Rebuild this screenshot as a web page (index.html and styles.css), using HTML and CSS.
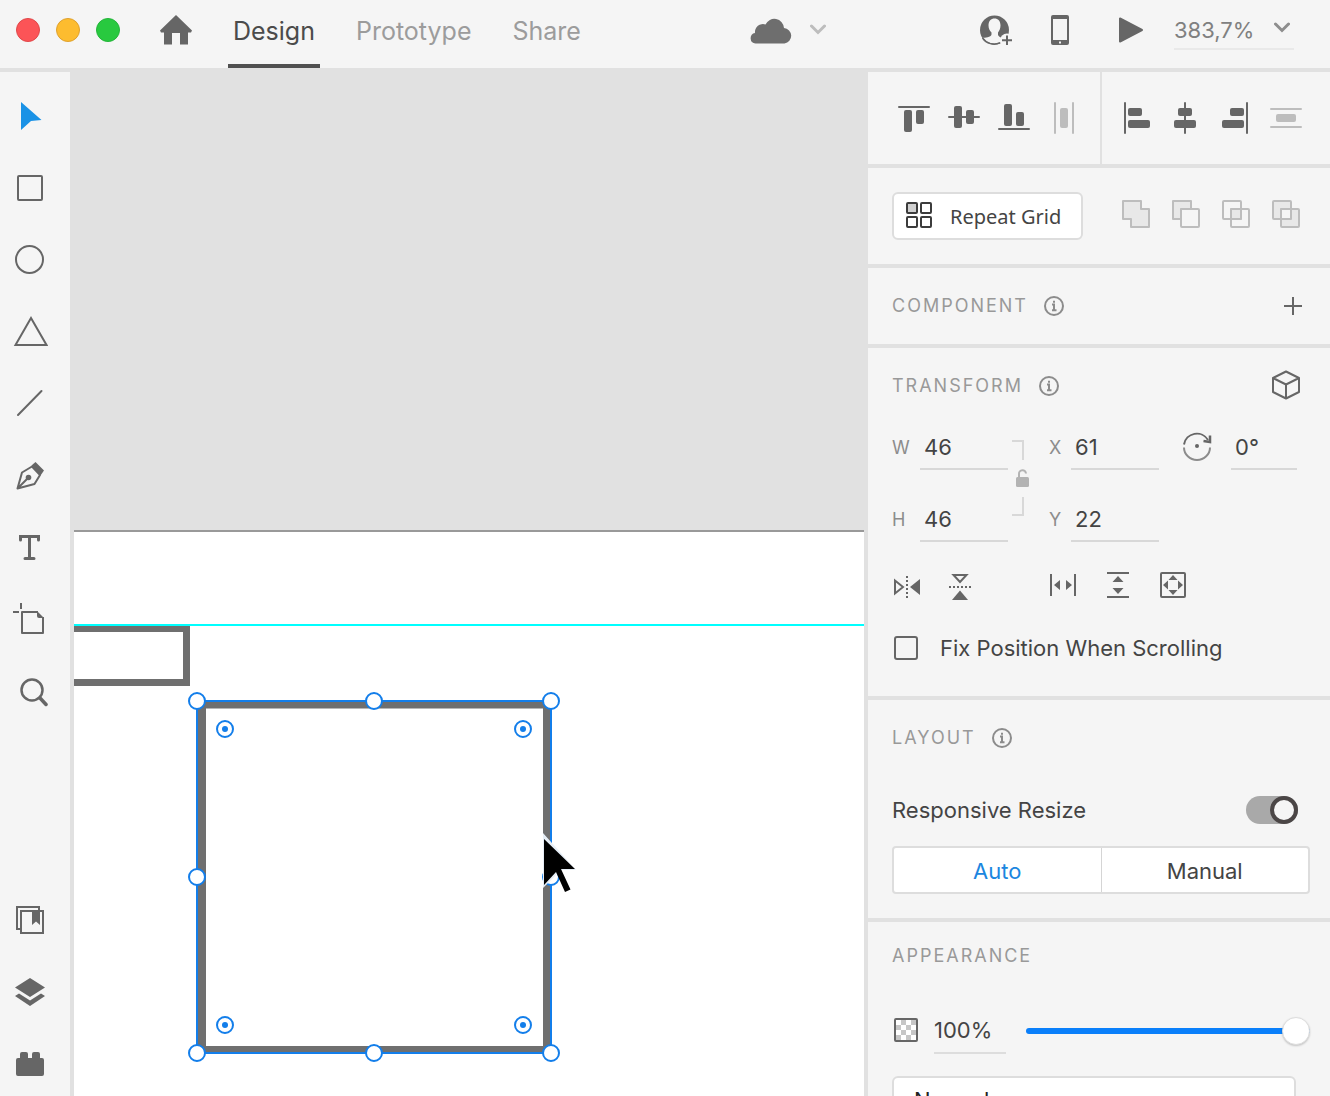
FILE: index.html
```html
<!DOCTYPE html>
<html lang="en">
<head>
  <meta charset="UTF-8">
  <meta name="viewport" content="width=device-width, initial-scale=1.0">
  <title>Design</title>
  <link rel="stylesheet" href="styles.css">
</head>
<body>
  <header class="topbar">
    <div class="lights">
      <button class="light red" aria-label="Close"></button>
      <button class="light yellow" aria-label="Minimize"></button>
      <button class="light green" aria-label="Zoom window"></button>
    </div>
    <button class="icon home" aria-label="Home">
      <svg width="32" height="32" viewBox="0 0 32 32"><path d="M16 1 32 16.500 31 18.500H28V30.500H20V19H12V30.500H4V18.500H1L0 16.500Z" fill="currentColor"/></svg>
    </button>
    <nav class="tabs">
      <button class="tab active">Design</button>
      <button class="tab">Prototype</button>
      <button class="tab">Share</button>
    </nav>
    <button class="icon cloud" aria-label="Cloud document">
      <svg width="42" height="28" viewBox="0 0 42 28"><path d="M5.500 27.500A5.300 5.300 0 0 1 5 17A8 8 0 0 1 15.500 8.500A9.700 9.700 0 0 1 34 12A7.800 7.800 0 0 1 34.500 27.500Z" fill="#6e6e6e"/></svg>
      <svg width="16" height="28" viewBox="0 0 16 28"><path d="M1.500 10 8 16.500 14.500 10" fill="none" stroke="#bdbdbd" stroke-width="3" stroke-linecap="round"/></svg>
    </button>
    <div class="actions">
      <button class="icon" aria-label="Invite">
        <svg width="36" height="36" viewBox="0 0 36 36">
          <circle cx="16.500" cy="18" r="14.500" fill="currentColor"/>
          <path d="M10.500 13.500C10.500 9 13 6.500 16.500 6.500S22.500 9 22.500 13.500C22.500 17 21 19 20 20.500V23C21 25.500 25 26 27 28L24 30C19 32 13 32 8.500 29.500L4.500 26C7 25.500 13 25.500 13.500 22.500V20.500C12 19 10.500 17 10.500 13.500Z" fill="#f5f5f5"/>
          <path d="M4.500 26A14 14 0 0 0 22 30.800" fill="none" stroke="currentColor" stroke-width="1.500"/>
          <circle cx="29" cy="28.500" r="7" fill="#f5f5f5"/>
          <path d="M29 23.500V33M24 28.200H34" stroke="currentColor" stroke-width="2"/>
        </svg>
      </button>
      <button class="icon device" aria-label="Device preview">
        <svg width="20" height="32" viewBox="0 0 20 32"><path fill-rule="evenodd" d="M3 1H17Q19 1 19 3V29Q19 31 17 31H3Q1 31 1 29V3Q1 1 3 1ZM3 5V26H17V5ZM9 27.500V29.500H11V27.500Z" fill="currentColor"/></svg>
      </button>
      <button class="icon" aria-label="Play">
        <svg width="26" height="28" viewBox="0 0 26 28"><path d="M2 2.500V25.500L24 14Z" fill="currentColor" stroke="currentColor" stroke-width="2" stroke-linejoin="round"/></svg>
      </button>
      <div class="zoom">
        <select aria-label="Zoom level"><option>383,7%</option></select>
        <svg width="16" height="12" viewBox="0 0 16 12"><path d="M1.500 2 8 8.500 14.500 2" fill="none" stroke="#8e8e8e" stroke-width="3" stroke-linecap="round"/></svg>
      </div>
    </div>
  </header>

  <main class="workspace">
    <aside class="toolbar">
      <div class="tools">
        <button class="tool selected" aria-label="Select"><svg viewBox="0 0 36 36"><path d="M9 4 29.500 22 19 23 9 32Z" fill="currentColor"/></svg></button>
        <button class="tool" aria-label="Rectangle"><svg viewBox="0 0 36 36"><rect class="line" x="6" y="6" width="24" height="24" rx="1"/></svg></button>
        <button class="tool" aria-label="Ellipse"><svg viewBox="0 0 36 36"><circle class="line" cx="17.500" cy="17.500" r="13.500"/></svg></button>
        <button class="tool" aria-label="Polygon"><svg viewBox="0 0 36 36"><path class="line" d="M19 4 34.500 31H3.500Z"/></svg></button>
        <button class="tool" aria-label="Line"><svg viewBox="0 0 36 36"><path class="line" d="M6 29 29.500 5" stroke-linecap="round"/></svg></button>
        <button class="tool" aria-label="Pen"><svg viewBox="0 0 36 36">
          <path class="line" d="M5.500 30.500 10 14.500 20 8.500 28 17 22.500 26Z M5.500 30.500 16.500 19.500" stroke-linejoin="round"/>
          <circle cx="16.500" cy="19.500" r="2.800" fill="currentColor"/>
          <path d="M19.500 7.500 23.500 4 32 12.500 28.500 17.500Z" fill="currentColor"/>
        </svg></button>
        <button class="tool" aria-label="Text"><svg viewBox="0 0 36 36"><path d="M8.500 10V6.500H26.500V10M17.500 6.500V28.500M13 28.500H22" fill="none" stroke="currentColor" stroke-width="3" stroke-linecap="round"/></svg></button>
        <button class="tool" aria-label="Artboard"><svg viewBox="0 0 36 36"><path class="line" d="M26 10H10V31H31V15M9 1V7M1 10H7" stroke-linejoin="round"/><path d="M25 9 32 16H27Q25 16 25 14Z" fill="currentColor"/></svg></button>
        <button class="tool" aria-label="Zoom"><svg viewBox="0 0 36 36"><circle cx="20" cy="16" r="10.500" fill="none" stroke="currentColor" stroke-width="2.500"/><path d="M28 24 34 30.500" stroke="currentColor" stroke-width="3.500" stroke-linecap="round"/></svg></button>
      </div>
      <div class="tools">
        <button class="tool" aria-label="Libraries"><svg viewBox="0 0 36 36"><path class="line" d="M8 27H5V5H27V8"/><rect class="line" x="9" y="9" width="22" height="22"/><path d="M20 9H28V23L24 19.500 20 23Z" fill="currentColor"/></svg></button>
        <button class="tool" aria-label="Layers"><svg viewBox="0 0 36 36"><path d="M18 4 33 13.500 18 23 3 13.500ZM3 22 7 19.500 18 26.500 29 19.500 33 22 18 32Z" fill="currentColor"/></svg></button>
        <button class="tool" aria-label="Plugins"><svg viewBox="0 0 36 36"><path d="M6 12H8V8Q8 6 10 6H14Q16 6 16 8V12H20V8Q20 6 22 6H26Q28 6 28 8V12H30Q32 12 32 14V28Q32 30 30 30H6Q4 30 4 28V14Q4 12 6 12Z" fill="currentColor"/></svg></button>
      </div>
    </aside>

    <section class="canvas">
      <div class="artboard">
        <div class="guide"></div>
        <div class="box"></div>
        <svg class="selection" width="372" height="370" viewBox="0 0 372 370">
          <path d="M9 9H363V361H9ZM18 16.500V354H355V16.500Z" fill="#6f6f6f" fill-rule="evenodd"/>
          <g fill="#fff" stroke="#137eea" stroke-width="2">
            <rect x="9" y="9" width="354" height="352" fill="none"/>
            <circle cx="9" cy="9" r="8"/><circle cx="186" cy="9" r="8"/><circle cx="363" cy="9" r="8"/>
            <circle cx="9" cy="185" r="8"/><circle cx="363" cy="185" r="8"/>
            <circle cx="9" cy="361" r="8"/><circle cx="186" cy="361" r="8"/><circle cx="363" cy="361" r="8"/>
            <circle cx="37" cy="37" r="8"/><circle cx="335" cy="37" r="8"/>
            <circle cx="37" cy="333" r="8"/><circle cx="335" cy="333" r="8"/>
          </g>
          <g fill="#137eea">
            <circle cx="37" cy="37" r="3"/><circle cx="335" cy="37" r="3"/>
            <circle cx="37" cy="333" r="3"/><circle cx="335" cy="333" r="3"/>
          </g>
        </svg>
        <svg class="pointer" width="40" height="66" viewBox="0 0 40 66"><path d="M3 3V58L15 46 15.500 45 22.500 40H36Z" fill="#e6eef6"/><path d="M4 9 35 39H21L30.500 59.500 25 62 16 42 4 55Z"/></svg>
      </div>
    </section>

    <aside class="panel">
      <section class="align">
        <div class="align-group">
          <button class="icon" aria-label="Align top"><svg width="32" height="32"><rect y="4" width="32" height="2" rx="1"/><rect x="6" y="8" width="8" height="22" rx="2"/><rect x="18" y="8" width="8" height="14" rx="2"/></svg></button>
          <button class="icon" aria-label="Align middle"><svg width="32" height="32"><rect y="14" width="32" height="2" rx="1"/><rect x="6" y="4" width="8" height="22" rx="2"/><rect x="18" y="8" width="8" height="14" rx="2"/></svg></button>
          <button class="icon" aria-label="Align bottom"><svg width="32" height="32"><rect y="26" width="32" height="2" rx="1"/><rect x="6" y="2" width="8" height="22" rx="2"/><rect x="18" y="10" width="8" height="14" rx="2"/></svg></button>
          <button class="icon off" aria-label="Distribute horizontally"><svg width="32" height="32"><rect x="6" width="2" height="32" rx="1"/><rect x="24" width="2" height="32" rx="1"/><rect x="12" y="6" width="8" height="20" rx="2"/></svg></button>
        </div>
        <div class="align-group">
          <button class="icon" aria-label="Align left"><svg width="32" height="32"><rect x="4" width="2" height="32" rx="1"/><rect x="8" y="6" width="14" height="8" rx="2"/><rect x="8" y="18" width="22" height="8" rx="2"/></svg></button>
          <button class="icon" aria-label="Align center"><svg width="32" height="32"><rect x="14" width="2" height="32" rx="1"/><rect x="8" y="6" width="14" height="8" rx="2"/><rect x="4" y="18" width="22" height="8" rx="2"/></svg></button>
          <button class="icon" aria-label="Align right"><svg width="32" height="32"><rect x="26" width="2" height="32" rx="1"/><rect x="10" y="6" width="14" height="8" rx="2"/><rect x="2" y="18" width="22" height="8" rx="2"/></svg></button>
          <button class="icon off" aria-label="Distribute vertically"><svg width="32" height="32"><rect y="6" width="32" height="2" rx="1"/><rect y="24" width="32" height="2" rx="1"/><rect x="6" y="12" width="20" height="8" rx="2"/></svg></button>
        </div>
      </section>

      <section class="repeat">
        <button class="repeat-button">
          <svg width="26" height="28" fill="none" stroke="#3c3c3c" stroke-width="2"><rect x="1" y="1" width="10" height="10" rx="1" fill="#d0d0d0"/><rect x="15" y="1" width="10" height="10" rx="1"/><rect x="1" y="15" width="10" height="10" rx="1"/><rect x="15" y="15" width="10" height="10" rx="1"/></svg>
          Repeat Grid
        </button>
        <div class="booleans">
          <button class="icon" aria-label="Add"><svg width="28" height="28"><path d="M1 1H19V9H27V27H9V19H1Z" fill="#e8e8e8"/></svg></button>
          <button class="icon" aria-label="Subtract"><svg width="28" height="28"><path d="M1 1H19V9H9V19H1Z" fill="#e8e8e8"/><rect x="9" y="9" width="18" height="18" rx="1"/></svg></button>
          <button class="icon" aria-label="Intersect"><svg width="28" height="28"><rect x="1" y="1" width="18" height="18" rx="1"/><rect x="9" y="9" width="18" height="18" rx="1"/><path d="M9 9H19V19H9Z" fill="#e8e8e8"/></svg></button>
          <button class="icon" aria-label="Exclude overlap"><svg width="28" height="28"><rect x="1" y="1" width="18" height="18" rx="1" fill="#e8e8e8"/><rect x="9" y="9" width="18" height="18" rx="1" fill="#e8e8e8"/><path d="M9 9H19V19H9Z" fill="#f5f5f5"/></svg></button>
        </div>
      </section>

      <section>
        <div class="section-head">
          <h2>Component</h2>
          <svg class="info" viewBox="0 0 20 20"><circle cx="10" cy="10" r="9"/><path d="M8 8.500H10V14M8 14.200H12.500M9 5.800H11"/></svg>
          <button class="icon end" aria-label="Add component"><svg width="20" height="20"><path d="M11 1V19M2 10H20" stroke="currentColor" stroke-width="2"/></svg></button>
        </div>
      </section>

      <section class="transform">
        <div class="section-head">
          <h2>Transform</h2>
          <svg class="info" viewBox="0 0 20 20"><circle cx="10" cy="10" r="9"/><path d="M8 8.500H10V14M8 14.200H12.500M9 5.800H11"/></svg>
          <button class="icon end" aria-label="3D transforms"><svg width="30" height="32" viewBox="1 0 30 32" fill="none" stroke="currentColor" stroke-width="2" stroke-linejoin="round"><path d="M15 1.500 28 8V22L15 28.500 2 22V8ZM2 8 15 14.500 28 8M15 14.500V28.500"/></svg></button>
        </div>
        <div class="fields">
          <label for="w">W</label><input id="w" type="text" value="46">
          <svg class="lock" width="24" height="118" viewBox="0 0 24 118">
            <path d="M4 17H15V36M15 73V91H4" fill="none" stroke="#d8d8d8" stroke-width="2"/>
            <rect x="8" y="53" width="13" height="10" rx="1.500" fill="#b3b3b3"/>
            <path d="M11 53V50A3.500 3.500 0 0 1 18 49.500" fill="none" stroke="#b3b3b3" stroke-width="2"/>
          </svg>
          <label for="x">X</label><input id="x" type="text" value="61">
          <label for="angle" class="angle" aria-label="Rotation"><svg width="30" height="30" viewBox="0 0 30 30" fill="none" stroke-width="2"><path d="M1 12.500A13 13 0 0 1 25 8" stroke="#666"/><path d="M1 15.500A13 12.500 0 0 0 27 15.500" stroke="#8c8c8c"/><circle cx="14" cy="14" r="2" fill="#666"/><path d="M27 3.500V10L20.500 9" stroke="#666" stroke-width="2.500"/></svg></label><input id="angle" type="text" value="0°">
          <label for="h">H</label><input id="h" type="text" value="46">
          <label for="y">Y</label><input id="y" type="text" value="22">
        </div>
        <div class="flips">
          <button class="icon" aria-label="Flip horizontally"><svg width="28" height="28"><path d="M3 8.500V21.500L11 15Z" fill="none" stroke="currentColor" stroke-width="2"/><path d="M15 4V27" stroke="currentColor" stroke-width="2" stroke-dasharray="2 2"/><path d="M28 7V23L18 15Z" fill="currentColor"/></svg></button>
          <button class="icon" aria-label="Flip vertically"><svg width="28" height="28"><path d="M6.500 3H19.500L13 10Z" fill="none" stroke="currentColor" stroke-width="2"/><path d="M2 15H25" stroke="currentColor" stroke-width="2" stroke-dasharray="2 2"/><path d="M5 28H21L13 18.500Z" fill="currentColor"/></svg></button>
          <button class="icon gap" aria-label="Fit width"><svg width="28" height="28"><path d="M2 2V24M26 2V24" stroke="currentColor" stroke-width="2"/><path d="M5 13 11 8V18ZM23 13 17 8V18Z" fill="currentColor"/></svg></button>
          <button class="icon" aria-label="Fit height"><svg width="28" height="28"><path d="M3 1H25M3 25H25" stroke="currentColor" stroke-width="2"/><path d="M14 4 19.500 10H8.500ZM14 22 19.500 16H8.500Z" fill="currentColor"/></svg></button>
          <button class="icon" aria-label="Fit both"><svg width="28" height="28"><rect x="2" y="1" width="24" height="24" rx="1" fill="none" stroke="currentColor" stroke-width="2"/><path d="M14 3 18.500 8H9.500ZM14 23 18.500 18H9.500ZM4 13 9 8.500V17.500ZM24 13 19 8.500V17.500Z" fill="currentColor"/></svg></button>
        </div>
        <label class="check"><input type="checkbox"> Fix Position When Scrolling</label>
      </section>

      <section class="layout">
        <div class="section-head">
          <h2>Layout</h2>
          <svg class="info" viewBox="0 0 20 20"><circle cx="10" cy="10" r="9"/><path d="M8 8.500H10V14M8 14.200H12.500M9 5.800H11"/></svg>
        </div>
        <div class="resize">
          <label for="resize">Responsive Resize</label>
          <input id="resize" class="switch" type="checkbox" checked>
        </div>
        <div class="segmented">
          <button class="active">Auto</button>
          <button>Manual</button>
        </div>
      </section>

      <section class="appearance">
        <div class="section-head">
          <h2>Appearance</h2>
        </div>
        <div class="opacity">
          <svg width="24" height="26"><rect x="1" y="1" width="22" height="22" rx="1" fill="#fff" stroke="#666" stroke-width="2"/><path d="M2 7H7V2H12V7H17V2H22V7H17V12H22V17H17V22H12V17H7V22H2V17H7V12H2ZM7 7V12H12V7ZM12 12V17H17V12Z" fill="#c6c6c6" fill-rule="evenodd"/></svg>
          <input class="percent" type="text" value="100%" aria-label="Opacity">
          <input class="slider" type="range" min="0" max="100" value="100" aria-label="Opacity slider">
        </div>
        <select class="blend" aria-label="Blend mode"><option>Normal</option></select>
      </section>
    </aside>
  </main>
</body>
</html>
```

FILE: styles.css
```css
*, *::before {
  box-sizing: border-box;
}
body {
  margin: 0;
  height: 100vh;
  display: flex;
  flex-direction: column;
  overflow: hidden;
  font-family: Inter, "Liberation Sans", sans-serif;
  font-size: 22px;
  color: #444;
  background-color: #f5f5f5;
}
button, input, select {
  font: inherit;
  color: inherit;
  border: none;
  background: none;
  padding: 0;
  margin: 0;
}
button {
  cursor: pointer;
}
svg {
  display: block;
  flex-shrink: 0;
}
.icon {
  display: flex;
  align-items: center;
  color: #666;
}

/* top bar */
.topbar {
  display: flex;
  align-items: center;
  height: 72px;
  flex-shrink: 0;
  padding: 0 36px 8px 16px;
  border-bottom: 4px solid #e1e1e1;
}
.lights {
  display: flex;
  gap: 16px;
  margin-right: 40px;
}
.light {
  width: 24px;
  height: 24px;
  border-radius: 50%;
}
.red {
  background-color: #fc5457;
  border: 1px solid #e0484a;
}
.yellow {
  background-color: #fdbc2f;
  border: 1px solid #dfa12e;
}
.green {
  background-color: #28c93f;
  border: 1px solid #24b53a;
}
.tabs {
  display: flex;
  gap: 31px;
  margin-left: 36px;
  margin-bottom: -8px;
}
.tab {
  height: 68px;
  padding: 0 5px 2px;
  font-size: 25px;
  color: #9c9c9c;
  border-bottom: 4px solid transparent;
}
.tab.active {
  color: #4b4b4b;
  border-bottom-color: #505050;
}
.cloud {
  gap: 18px;
  margin: 0 auto;
  padding-left: 12px;
}
.actions {
  display: flex;
  align-items: center;
  gap: 36px;
}
.device {
  margin-right: 12px;
}
.zoom {
  position: relative;
  width: 120px;
  margin-left: -6px;
}
.zoom select {
  width: 100%;
  height: 40px;
  padding-top: 2px;
  color: #808080;
  appearance: none;
  border-bottom: 2px solid #e9e9e9;
}
.zoom svg {
  position: absolute;
  right: 4px;
  top: 12px;
  pointer-events: none;
}

/* left tools */
.workspace {
  flex: 1;
  min-height: 0;
  display: flex;
}
.toolbar {
  width: 74px;
  flex-shrink: 0;
  display: flex;
  flex-direction: column;
  justify-content: space-between;
  padding: 16px 0 4px;
  border-right: 4px solid #e1e1e1;
}
.tools {
  display: flex;
  flex-direction: column;
  gap: 16px;
}
.tool {
  display: flex;
  align-items: center;
  justify-content: center;
  width: 60px;
  height: 56px;
  color: #666;
}
.tool.selected {
  color: #1a92e6;
}
.tool svg {
  width: 36px;
  height: 36px;
}
.line {
  fill: none;
  stroke: currentColor;
  stroke-width: 2;
}

/* canvas */
.canvas {
  position: relative;
  flex: 1;
  overflow: hidden;
  background-color: #e1e1e1;
}
.artboard {
  position: absolute;
  top: 458px;
  left: 0;
  right: 0;
  bottom: 0;
  background-color: #fff;
  border-top: 2px solid #999;
}
.guide {
  position: absolute;
  top: 92px;
  left: 0;
  right: 0;
  height: 2px;
  background-color: #00ffff;
}
.box {
  position: absolute;
  top: 94px;
  left: 0;
  width: 116px;
  height: 60px;
  border: solid #6f6f6f;
  border-width: 6px 7px 7px 0;
}
.selection {
  position: absolute;
  top: 160px;
  left: 114px;
}
.pointer {
  position: absolute;
  top: 298px;
  left: 466px;
}

/* right panel */
.panel {
  width: 466px;
  flex-shrink: 0;
  overflow: hidden;
  border-left: 4px solid #e1e1e1;
}
.panel > section {
  padding-left: 24px;
  border-bottom: 4px solid #e1e1e1;
}
.panel > .align {
  display: flex;
  padding: 0;
}
.align-group {
  display: flex;
  gap: 18px;
  padding: 30px 20px 30px 30px;
  fill: #666;
}
.align-group + .align-group {
  padding-left: 18px;
  border-left: 2px solid #e1e1e1;
}
.off {
  fill: #bdbdbd;
}
.repeat {
  display: flex;
  align-items: center;
  justify-content: space-between;
  height: 100px;
  padding-right: 30px;
}
.repeat-button {
  display: flex;
  align-items: center;
  gap: 18px;
  height: 48px;
  padding: 0 20px 0 12px;
  font-family: "Noto Sans", sans-serif;
  font-size: 20px;
  background-color: #fff;
  border: 2px solid #ddd;
  border-radius: 6px;
}
.booleans {
  display: flex;
  gap: 22px;
  padding-bottom: 4px;
  fill: none;
  stroke: #bdbdbd;
  stroke-width: 2;
  stroke-linejoin: round;
}
.section-head {
  display: flex;
  align-items: center;
  height: 76px;
  padding-right: 28px;
}
.section-head h2 {
  margin: 0 16px 0 0;
  font-size: 18px;
  font-weight: 400;
  line-height: 24px;
  letter-spacing: 2px;
  text-transform: uppercase;
  color: #999;
}
.info {
  width: 20px;
  height: 20px;
  fill: none;
  stroke: #8c8c8c;
  stroke-width: 2;
}
.end {
  margin-left: auto;
}
.fields {
  display: grid;
  grid-template-columns: 28px 88px 41px 22px 88px 24px 48px 66px;
  grid-template-rows: 46px 46px;
  row-gap: 26px;
}
.fields label {
  align-self: center;
  font-size: 18px;
  color: #8c8c8c;
}
.fields input {
  width: 100%;
  padding: 2px 0 0 4px;
  border-bottom: 2px solid #d8d8d8;
}
.lock {
  grid-column: 3;
  grid-row: 1 / 3;
}
.fields .angle {
  grid-column: 7;
}
.flips {
  display: flex;
  gap: 27px;
  margin-top: 30px;
}
.gap {
  margin-left: 47px;
}
.check {
  display: flex;
  align-items: center;
  gap: 22px;
  height: 24px;
  margin: 36px 0;
  padding-left: 2px;
}
.check input {
  appearance: none;
  width: 24px;
  height: 24px;
  border: 2px solid #666;
  border-radius: 3px;
}
.resize {
  display: flex;
  align-items: center;
  justify-content: space-between;
  height: 28px;
  margin: 20px 32px 22px 0;
}
.switch {
  appearance: none;
  display: flex;
  justify-content: flex-end;
  width: 52px;
  height: 28px;
  border-radius: 14px;
  background-color: #a9a9a9;
}
.switch::before {
  content: "";
  width: 28px;
  height: 28px;
  border: 4px solid #4b4646;
  border-radius: 50%;
  background-color: #f5f5f5;
}
.segmented {
  display: flex;
  height: 48px;
  margin: 0 20px 24px 0;
  background-color: #fff;
  border: 2px solid #ddd;
  border-radius: 4px;
}
.segmented button {
  flex: 1;
  padding-top: 2px;
}
.segmented button + button {
  border-left: 1px solid #d5d5d5;
}
.segmented .active {
  color: #1b86e0;
}
.appearance .section-head {
  height: 68px;
}
.opacity {
  display: flex;
  align-items: center;
  height: 46px;
  margin: 18px 20px 22px 0;
  padding-left: 2px;
}
.percent {
  width: 72px;
  height: 46px;
  margin: 0 20px 0 16px;
  border-bottom: 2px solid #ddd;
}
.slider {
  appearance: none;
  flex: 1;
  min-width: 0;
  height: 28px;
}
.slider::-webkit-slider-runnable-track {
  height: 6px;
  border-radius: 3px;
  background-color: #0a7ffa;
}
.slider::-webkit-slider-thumb {
  appearance: none;
  box-sizing: border-box;
  width: 28px;
  height: 28px;
  margin-top: -11px;
  border: 1px solid #ddd;
  border-radius: 50%;
  background-color: #fff;
  box-shadow: 0 1px 2px rgba(0,0,0,0.2);
}
.blend {
  appearance: none;
  display: block;
  width: 404px;
  height: 48px;
  padding-left: 20px;
  color: #222;
  background-color: #fff;
  border: 2px solid #ddd;
  border-radius: 6px;
}
```
